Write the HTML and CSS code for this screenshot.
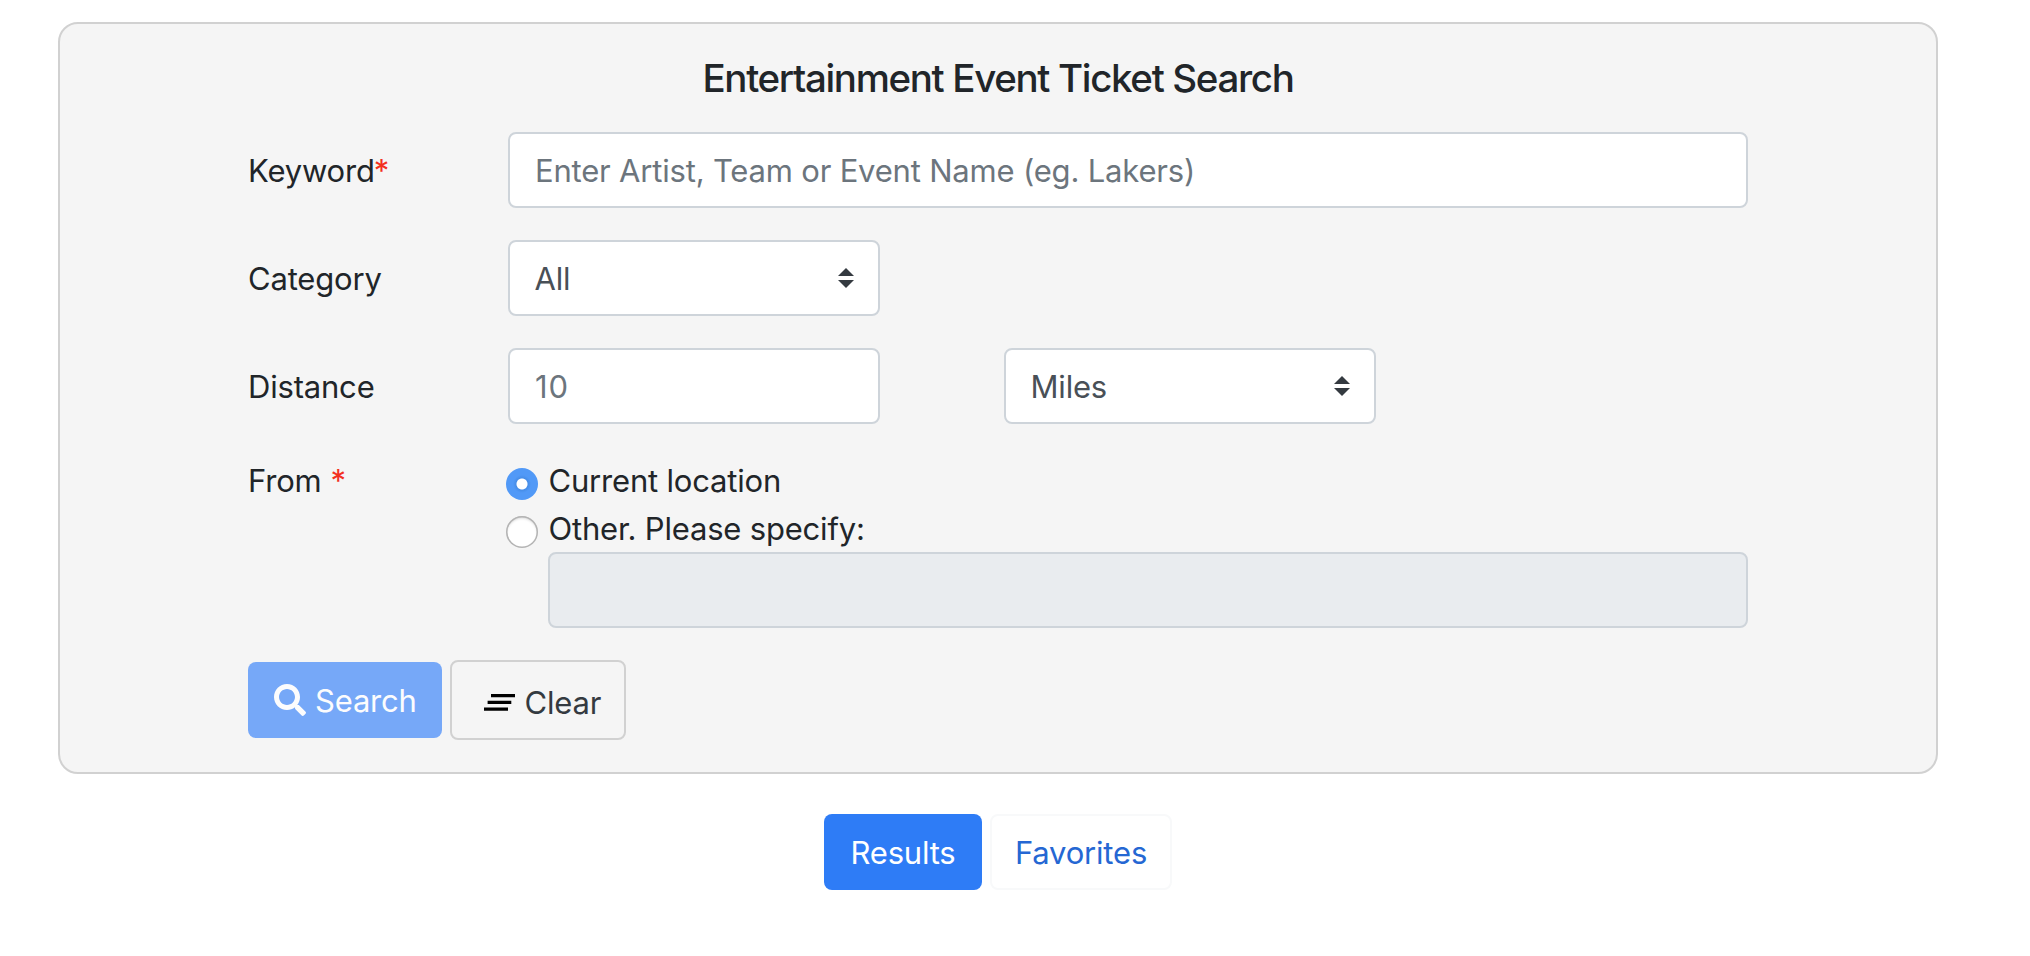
FILE: index.html
```html
<!DOCTYPE html>
<html lang="en">
<head>
<meta charset="utf-8">
<title>Event Search</title>
<link rel="stylesheet" href="styles.css">
</head>
<body>
<form class="card">
  <h1 class="title">Entertainment Event Ticket Search</h1>
  <div class="row">
    <label class="label">Keyword<span class="required">*</span></label>
    <input class="control" type="text" placeholder="Enter Artist, Team or Event Name (eg. Lakers)">
  </div>
  <div class="row">
    <label class="label">Category</label>
    <div class="select">
      <select class="control"><option>All</option></select>
      <svg class="arrows" viewBox="0 0 16 20"><path d="M8 0l8 8H0zM0 12h16l-8 8z"/></svg>
    </div>
  </div>
  <div class="row">
    <label class="label">Distance</label>
    <input class="control short" type="text" placeholder="10">
    <div class="select units">
      <select class="control"><option>Miles</option></select>
      <svg class="arrows" viewBox="0 0 16 20"><path d="M8 0l8 8H0zM0 12h16l-8 8z"/></svg>
    </div>
  </div>
  <div class="row from">
    <div class="label">From <span class="required">*</span></div>
    <div class="options">
      <label class="option"><span class="radio checked"></span><span class="caption">Current location</span></label>
      <label class="option"><span class="radio"></span><span class="caption">Other. Please specify:</span></label>
      <input class="control place" type="text" disabled>
    </div>
  </div>
  <div class="actions">
    <button class="btn search" type="button"><svg class="glass" viewBox="0 0 512 512"><path d="M505 442.700L405.300 343c-4.500-4.500-10.600-7-17-7H372c27.600-35.300 44-79.700 44-128C416 93.100 322.900 0 208 0S0 93.100 0 208s93.100 208 208 208c48.300 0 92.700-16.400 128-44v16.300c0 6.400 2.500 12.500 7 17l99.700 99.700c9.400 9.400 24.600 9.400 33.900 0l28.300-28.300c9.400-9.400 9.400-24.600.1-34zM208 336c-70.700 0-128-57.200-128-128 0-70.700 57.200-128 128-128 70.700 0 128 57.200 128 128 0 70.700-57.200 128-128 128z"/></svg><span class="caption">Search</span></button>
    <button class="btn clear" type="button"><svg class="lines" viewBox="0 0 31 17"><path d="M7 0h24v3.300H7zM3.600 6.800h23.700v3.300H3.600zM0 13.400h24v3.300H0z"/></svg><span class="caption">Clear</span></button>
  </div>
</form>
<div class="tabs">
  <button class="btn results" type="button"><span class="caption">Results</span></button>
  <button class="btn favorites" type="button"><span class="caption">Favorites</span></button>
</div>
</body>
</html>
```
FILE: styles.css
```css
* { box-sizing: border-box; }
body {
  margin: 0;
  padding: 22px 92px 0 58px;
  background: #fff;
  color: #212529;
  font-family: Inter, "Liberation Sans", sans-serif;
  font-size: 31px;
  letter-spacing: -0.19px;
  line-height: 48px;
}
.card {
  height: 752px;
  padding: 30px 188px 0;
  border: 2px solid #d1d1d1;
  border-radius: 20px;
  background: #f5f5f5;
}
.title {
  margin: 0 0 30px;
  font-size: 38.5px;
  font-weight: 500;
  letter-spacing: -1.34px;
  line-height: 48px;
  text-align: center;
  white-space: nowrap;
}
.row { display: flex; margin-bottom: 32px; }
.label { flex: 0 0 260px; padding-top: 15px; white-space: nowrap; }
.required { margin-left: -1px; color: #f3301f; }
.control {
  flex: 1;
  width: 100%;
  height: 76px;
  min-width: 0;
  padding: 0 25px;
  border: 2px solid #ced4da;
  border-radius: 8px;
  background: #fff;
  color: #495057;
  font: inherit;
  letter-spacing: inherit;
  appearance: none;
}
select.control { padding: 2px 25px 0 24.5px; }
.control::placeholder { color: #6c757d; opacity: 1; }
.control.short { flex: 0 0 372px; letter-spacing: 0.8px; }
.select { display: grid; flex: 0 0 372px; align-items: center; }
.select > * { grid-area: 1 / 1; }
.units { margin-left: 124px; }
.arrows {
  width: 16px;
  height: 20px;
  margin-right: 26px;
  justify-self: end;
  fill: #343a40;
  pointer-events: none;
}
.from .label { padding-top: 1px; }
.from .required { margin-left: 0.5px; }
.options { flex: 1; }
.option { display: flex; height: 48px; margin-left: -2px; }
.caption { padding-top: 2px; }
.option .caption { padding-top: 1px; }
.radio {
  width: 32px;
  height: 32px;
  margin: 12px 10.5px 0 0;
  border-radius: 50%;
  background: #fff;
  box-shadow: inset 0 0 0 1.5px #b4b4b4, inset 0 2px 3px #ccc;
}
.radio.checked {
  background: radial-gradient(circle, #fff 5px, #468de8 6px, #5199f7 9px);
  box-shadow: none;
}
.control.place { display: block; width: 1200px; margin-left: 40px; background: #e9ecef; }
.actions { display: flex; gap: 8px; }
.btn {
  display: flex;
  align-items: center;
  justify-content: center;
  height: 76px;
  padding: 0;
  border: 2px solid transparent;
  border-radius: 8px;
  font: inherit;
  letter-spacing: inherit;
  white-space: nowrap;
}
.search {
  width: 194px;
  margin-top: 2px;
  padding-left: 24px;
  justify-content: flex-start;
  gap: 9px;
  background: #76a8f8;
  color: #fcfcfd;
}
.glass { width: 32px; height: 32px; fill: currentColor; }
.clear {
  width: 176px;
  height: 80px;
  padding: 4px 0 0 32px;
  justify-content: flex-start;
  gap: 9.5px;
  border-color: #d1d1d1;
  background: #f5f5f5;
  color: #343a40;
}
.lines { width: 31px; height: 17px; fill: #000; }
.tabs { display: flex; justify-content: center; gap: 8px; margin-top: 40px; }
.results { width: 158px; background: #2e7cf6; color: #fff; }
.favorites { width: 182px; border-color: #f8f9fa; background: #fff; color: #2567d3; }
```
